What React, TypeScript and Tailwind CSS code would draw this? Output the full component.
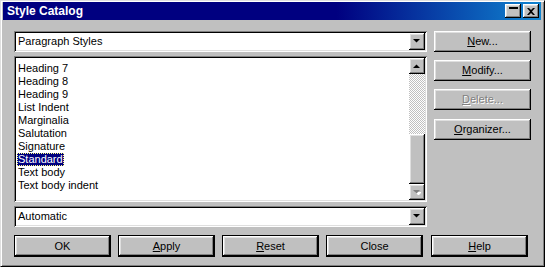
import React from 'react';

const raised =
  'bg-[#c0c0c0] shadow-[inset_-1px_-1px_#000,inset_1px_1px_#fff,inset_-2px_-2px_#808080,inset_2px_2px_#dfdfdf]';
const sunken =
  'bg-white shadow-[inset_1px_1px_#808080,inset_-1px_-1px_#fff,inset_2px_2px_#000,inset_-2px_-2px_#dfdfdf]';

const styles = [
  'Heading 7',
  'Heading 8',
  'Heading 9',
  'List Indent',
  'Marginalia',
  'Salutation',
  'Signature',
  'Standard',
  'Text body',
  'Text body indent',
];

const Arrow = ({ up = false, disabled = false }: { up?: boolean; disabled?: boolean }) => (
  <svg width="8" height="5" viewBox="0 0 8 5" className="block">
    {disabled && (
      <polygon points={up ? '1,5 8,5 4.5,1.5' : '1,1 8,1 4.5,4.5'} fill="#fff" transform="translate(1,1)" />
    )}
    <polygon points={up ? '0,4 7,4 3.5,0.5' : '0,0 7,0 3.5,3.5'} fill={disabled ? '#808080' : '#000'} />
  </svg>
);

const Combo = ({ value }: { value: string }) => (
  <div className={`${sunken} h-[21px] flex items-center p-[2px]`}>
    <span className="flex-1 pl-[2px] leading-none">{value}</span>
    <div className={`${raised} w-[16px] h-full flex items-center justify-center`}>
      <Arrow />
    </div>
  </div>
);

const SideButton = ({ children, disabled = false }: { children: React.ReactNode; disabled?: boolean }) => (
  <div
    className={`${raised} h-[21px] flex items-center justify-center ${
      disabled ? 'text-[#808080] [text-shadow:1px_1px_#fff]' : ''
    }`}
  >
    {children}
  </div>
);

const BottomButton = ({ children }: { children: React.ReactNode }) => (
  <div className="w-[97px] h-[22px] border border-black">
    <div className={`${raised} h-full flex items-center justify-center`}>{children}</div>
  </div>
);

const U = ({ children }: { children: React.ReactNode }) => (
  <span className="underline underline-offset-[1px]">{children}</span>
);

export default function App() {
  return (
    <div
      className="w-[545px] h-[267px] bg-[#c0c0c0] border border-[#dfdfdf] border-r-black border-b-black text-black text-[11px]"
      style={{ fontFamily: '"Liberation Sans", Arial, sans-serif' }}
    >
      <div className="h-full flex flex-col p-[1px] shadow-[inset_1px_1px_#fff,inset_-1px_-1px_#808080]">
        {/* Title bar */}
        <div className="h-[18px] ml-[1px] mr-[2px] flex items-center bg-[linear-gradient(to_right,#000080_62%,#1084d0)] pl-[4px] pr-[2px]">
          <span className="flex-1 text-white font-bold text-[12px]">Style Catalog</span>
          <div className={`${raised} w-[16px] h-[14px] flex justify-center pt-[3px]`}>
            <div className="w-[9px] h-[2px] bg-black" />
          </div>
          <div className={`${raised} w-[16px] h-[14px] ml-[2px] flex items-center justify-center`}>
            <svg width="8" height="7" viewBox="0 0 8 7">
              <path d="M0 0h2l2 2 2-2h2L5 3.5 8 7H6L4 5 2 7H0l3-3.5z" fill="#000" />
            </svg>
          </div>
        </div>

        {/* Body */}
        <div className="pt-[11px] pl-[12px]">
          <div className="flex gap-[7px]">
            <div className="w-[413px] flex flex-col">
              <Combo value="Paragraph Styles" />
              <div className={`${sunken} mt-[4px] h-[146px] flex p-[2px]`}>
                <ul className="flex-1 pt-[4px] pl-[1px]">
                  {styles.map((s) => (
                    <li key={s} className="h-[13px] leading-[13px]">
                      {s === 'Standard' ? (
                        <span className="inline-block bg-[#000080] text-white px-[1px] outline outline-1 outline-dotted outline-[#ffff80] -outline-offset-1">
                          {s}
                        </span>
                      ) : (
                        <span className="px-[1px]">{s}</span>
                      )}
                    </li>
                  ))}
                </ul>
                <div className="w-[16px] flex flex-col">
                  <div className={`${raised} h-[16px] flex items-center justify-center`}>
                    <Arrow up />
                  </div>
                  <div className="flex-1 bg-[image:repeating-conic-gradient(#c0c0c0_0%_25%,#fff_0%_50%)] bg-[length:2px_2px] bg-size-[2px_2px]" />
                  <div className={`${raised} h-[50px]`} />
                  <div className={`${raised} h-[16px] flex items-center justify-center`}>
                    <Arrow disabled />
                  </div>
                </div>
              </div>
              <div className="mt-[4px]">
                <Combo value="Automatic" />
              </div>
            </div>
            <div className="w-[97px] flex flex-col gap-[8px]">
              <SideButton>
                <span>
                  <U>N</U>ew...
                </span>
              </SideButton>
              <SideButton>
                <span>
                  <U>M</U>odify...
                </span>
              </SideButton>
              <SideButton disabled>
                <span>
                  <U>D</U>elete...
                </span>
              </SideButton>
              <div className="mt-[1px]">
                <SideButton>
                  <span>
                    <U>O</U>rganizer...
                  </span>
                </SideButton>
              </div>
            </div>
          </div>

          <div className="flex mt-[8px]">
            <div className="w-[413px] flex gap-[7px]">
              <BottomButton>OK</BottomButton>
              <BottomButton>
                <span>
                  <U>A</U>pply
                </span>
              </BottomButton>
              <BottomButton>
                <span>
                  <U>R</U>eset
                </span>
              </BottomButton>
              <BottomButton>Close</BottomButton>
            </div>
            <div className="ml-[4px]">
              <BottomButton>
                <span>
                  <U>H</U>elp
                </span>
              </BottomButton>
            </div>
          </div>
        </div>
      </div>
    </div>
  );
}
